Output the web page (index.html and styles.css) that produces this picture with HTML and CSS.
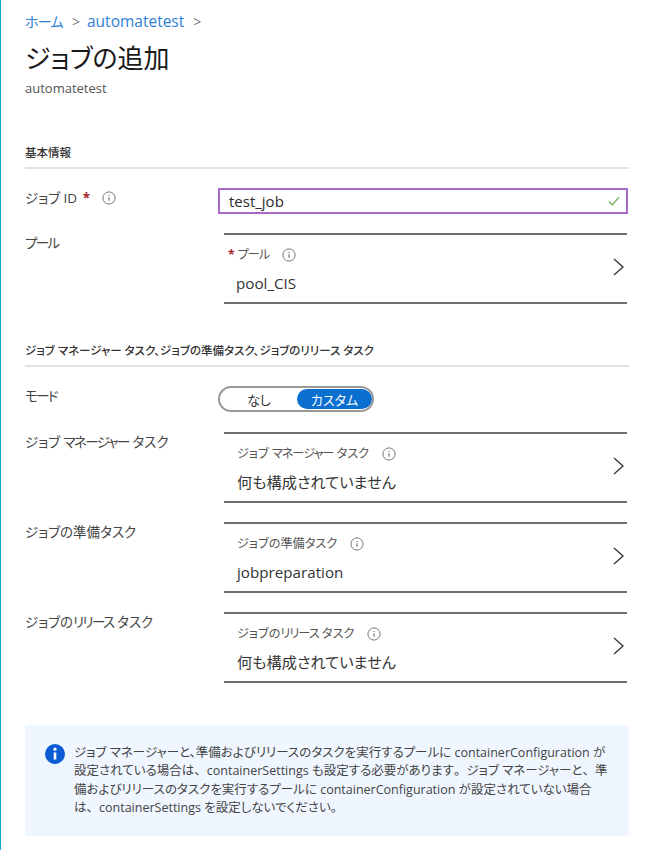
FILE: index.html
```html
<!DOCTYPE html>
<html lang="ja">
<head>
<meta charset="utf-8">
<title>ジョブの追加</title>
<link rel="stylesheet" href="styles.css">
</head>
<body>
<svg class="defs" width="0" height="0" aria-hidden="true">
  <symbol id="i" viewBox="0 0 14 14"><circle cx="7" cy="7" r="6.1" fill="none" stroke="#777" stroke-width="1"/><path d="M7 6.2v3.6M7 4v1.1" stroke="#666" stroke-width="1.1" fill="none"/></symbol>
  <symbol id="c" viewBox="0 0 11 18"><path d="M1 1l9 8-9 8" fill="none" stroke="#333" stroke-width="1.3"/></symbol>
</svg>
<main class="page">
  <nav class="crumbs"><a class="home">ホーム</a><span class="sep">&gt;</span><a>automatetest</a><span class="sep">&gt;</span></nav>
  <h1 class="title">ジョブの追加</h1>
  <div class="subtitle">automatetest</div>

  <section class="sec-one">
    <h2 class="sec-head">基本情報</h2>
    <div class="row row-id">
      <div class="label">ジョブ ID <span class="req">*</span><svg class="info info-id"><use href="#i"/></svg></div>
      <div class="input">test_job<svg class="check" viewBox="0 0 12 10"><path d="M1 5.5l3.4 3.4L11 1.2" fill="none" stroke="#5fa83a" stroke-width="1.1"/></svg></div>
    </div>
    <div class="row row-panel">
      <div class="label"><span class="k">プール</span></div>
      <div class="panel">
        <div class="panel-body narrow">
          <div class="p-label"><span class="req">*</span><span class="k">プール</span><svg class="info"><use href="#i"/></svg></div>
          <div class="p-value indent">pool_CIS</div>
        </div>
        <svg class="chev"><use href="#c"/></svg>
      </div>
    </div>
  </section>

  <section class="sec-two">
    <h2 class="sec-head">ジョブ マネージャー タスク、ジョブの準備タスク、ジョブのリリース タスク</h2>
    <div class="row row-mode">
      <div class="label"><span class="k">モード</span></div>
      <div class="toggle"><span class="opt">なし</span><span class="opt on">カスタム</span></div>
    </div>
    <div class="row row-panel">
      <div class="label">ジョブ <span class="k">マネージャー</span> タスク</div>
      <div class="panel">
        <div class="panel-body">
          <div class="p-label">ジョブ <span class="k">マネージャー</span> タスク<svg class="info"><use href="#i"/></svg></div>
          <div class="p-value">何も構成されていません</div>
        </div>
        <svg class="chev"><use href="#c"/></svg>
      </div>
    </div>
    <div class="row row-panel">
      <div class="label">ジョブの準備タスク</div>
      <div class="panel">
        <div class="panel-body">
          <div class="p-label">ジョブの準備タスク<svg class="info"><use href="#i"/></svg></div>
          <div class="p-value">jobpreparation</div>
        </div>
        <svg class="chev"><use href="#c"/></svg>
      </div>
    </div>
    <div class="row row-panel">
      <div class="label">ジョブの<span class="k">リリース</span> タスク</div>
      <div class="panel">
        <div class="panel-body">
          <div class="p-label">ジョブの<span class="k">リリース</span> タスク<svg class="info"><use href="#i"/></svg></div>
          <div class="p-value">何も構成されていません</div>
        </div>
        <svg class="chev"><use href="#c"/></svg>
      </div>
    </div>
  </section>

  <aside class="notice">
    <svg class="notice-icon" viewBox="0 0 20 20"><circle cx="10" cy="10" r="10" fill="#0b5bd3"/><path d="M10 8.5v7" stroke="#fff" stroke-width="2.6" fill="none"/><circle cx="10" cy="5.2" r="1.6" fill="#fff"/></svg>
    <p class="notice-text">ジョブ マネージャーと、準備およびリリースのタスクを実行するプールに containerConfiguration が<br>設定されている場合は<span class="fw">、</span>containerSettings も設定する必要があります<span class="fw">。</span>ジョブ マネージャーと<span class="fw">、</span>準<br>備およびリリースのタスクを実行するプールに containerConfiguration が設定されていない場合<br>は<span class="fw">、</span>containerSettings を設定しないでください。</p>
  </aside>
</main>
</body>
</html>
```
FILE: styles.css
```css
* { box-sizing: border-box; }
html, body { margin: 0; height: 100%; }
body {
  background: #fff;
  border-left: 1px solid #12a9cf;
  color: #2b2b2b;
  font-family: "Open Sans", "Noto Sans CJK JP", sans-serif;
  font-feature-settings: "palt";
  font-size: 14px;
  overflow: hidden;
}
.defs { position: absolute; }
.page { padding: 10px 25px 0 24px; }
.crumbs { display: flex; align-items: center; height: 22px; font-size: 15.5px; color: #2f7fd6; }
.home { font-size: 14px; letter-spacing: -0.7px; }
.sep { color: #777; margin: 0 7px 0 9px; font-size: 14px; }
.title { margin: 8px 0 0; font-size: 26px; line-height: 36px; font-weight: 400; color: #1a1a1a; }
.subtitle { margin-top: 4px; font-size: 13px; line-height: 16px; color: #555; }
.sec-one { margin-top: 49px; }
.sec-two { margin-top: 39px; }
.sec-head {
  margin: 0;
  height: 24px;
  font-size: 11.5px;
  line-height: 16px;
  font-weight: 500;
  color: #333;
  border-bottom: 2px solid #e2e2e2;
}
.row { display: grid; grid-template-columns: 193px 1fr; }
.label { font-size: 13.5px; line-height: 20px; color: #444; display: flex; align-items: center; align-self: start; white-space: pre; }
.k { letter-spacing: -1.6px; }
.req { color: #a4262c; font-weight: 700; margin-left: 2px; }
.info { width: 14px; height: 14px; margin-left: 13px; flex: none; }
.info-id { margin-left: 12px; }
.row-id { margin-top: 19px; }
.row-id .label { margin-top: 0; }
.input {
  height: 26px;
  margin-right: 1px;
  padding: 0 6px 0 9px;
  border: 2px solid #a868c8;
  font-size: 15px;
  color: #2b2b2b;
  display: flex;
  align-items: center;
  justify-content: space-between;
}
.check { width: 12px; height: 10px; }
.row-panel { margin-top: 19px; }
.row-panel .label { margin-top: 0; }
.panel {
  margin: 0 2px 0 6px;
  height: 71px;
  border-top: 2px solid #707070;
  border-bottom: 2px solid #707070;
  display: flex;
  align-items: center;
  justify-content: space-between;
  padding: 1px 3px 0 13px;
}
.p-label { font-size: 12.2px; line-height: 18px; color: #555; display: flex; align-items: center; white-space: pre; }
.p-label .k { letter-spacing: -1px; }
.p-label .req { margin-left: 0; margin-right: 3px; }
.p-value { margin-top: 9px; font-size: 15.2px; line-height: 20px; color: #333; }
.panel-body.narrow { margin-left: -9px; }
.indent { margin-left: 8px; }
.chev { width: 11px; height: 18px; margin-bottom: 4px; }
.row-mode { margin-top: 19px; }
.row-mode .label { margin-top: 0; }
.toggle {
  width: 156px;
  height: 26px;
  margin-bottom: 1px;
  border: 2px solid #999;
  border-radius: 13px;
  padding: 1px 0 1px 1px;
  display: flex;
  font-size: 13px;
  color: #333;
}
.opt { flex: 1; display: flex; align-items: center; justify-content: center; border-radius: 11px; }
.opt.on { flex: none; width: 75px; background: #0b6fd0; color: #fff; }
.notice {
  margin-top: 42px;
  height: 111px;
  background: #eff6ff;
  border-radius: 2px;
  padding: 19px 20px 0 20px;
  display: flex;
  gap: 9px;
}
.notice-icon { width: 20px; height: 20px; flex: none; }
.notice-text { margin: 0; font-size: 12.5px; line-height: 18.3px; color: #444; white-space: nowrap; }
.fw { font-feature-settings: normal; }
```
